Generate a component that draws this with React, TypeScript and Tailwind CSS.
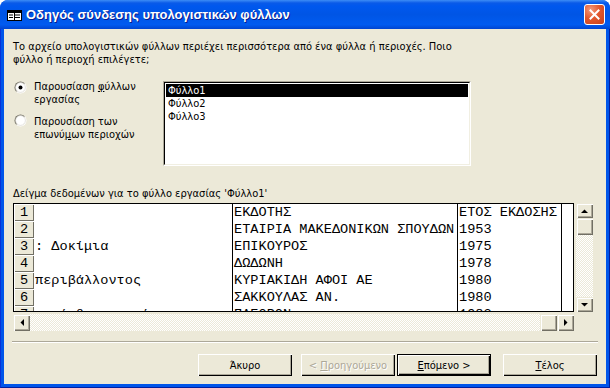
import React from 'react';

const ui = "font-['DejaVu_Sans_Condensed','DejaVu_Sans',sans-serif] [font-stretch:condensed] text-[11px] leading-[13px] text-black";
const mono = "font-['Liberation_Mono','Courier_New',monospace] text-[13.6px] leading-[17px] text-black";

const rows = [
  ['', 'ΕΚΔΟΤΗΣ', 'ΕΤΟΣ ΕΚΔΟΣΗΣ'],
  ['', 'ΕΤΑΙΡΙΑ ΜΑΚΕΔΟΝΙΚΩΝ ΣΠΟΥΔΩΝ', '1953'],
  [': Δοκίμια', 'ΕΠΙΚΟΥΡΟΣ', '1975'],
  ['', 'ΔΩΔΩΝΗ', '1978'],
  ['περιβάλλοντος', 'ΚΥΡΙΑΚΙΔΗ ΑΦΟΙ ΑΕ', '1980'],
  ['', 'ΣΑΚΚΟΥΛΑΣ ΑΝ.', '1980'],
  ['οι άνθρωποι σήμερα', 'ΠΛΕΘΡΟΝ', '1982'],
];

const Arrow = ({ dir }: { dir: 'up' | 'down' | 'left' | 'right' }) => {
  const pts = {
    up: '0,4 7,4 3.5,0.5',
    down: '0,0 7,0 3.5,3.5',
    left: '4,0 4,7 0.5,3.5',
    right: '0,0 0,7 3.5,3.5',
  }[dir];
  const vertical = dir === 'up' || dir === 'down';
  return (
    <svg width={vertical ? 7 : 4} height={vertical ? 4 : 7} viewBox={vertical ? '0 0 7 4' : '0 0 4 7'}>
      <polygon points={pts} fill="#000" />
    </svg>
  );
};

const ScrollBtn = ({ dir, className = '' }: { dir: 'up' | 'down' | 'left' | 'right'; className?: string }) => (
  <div
    className={`flex items-center justify-center bg-[#ece9d8] shadow-[inset_1px_1px_#ece9d8,inset_2px_2px_#fff,inset_-1px_-1px_#716f64,inset_-2px_-2px_#aca899] ${className}`}
  >
    <Arrow dir={dir} />
  </div>
);

const Thumb = ({ className = '' }: { className?: string }) => (
  <div className={`bg-[#ece9d8] shadow-[inset_1px_1px_#ece9d8,inset_2px_2px_#fff,inset_-1px_-1px_#716f64,inset_-2px_-2px_#aca899] ${className}`} />
);

const Radio = ({ checked }: { checked?: boolean }) => (
  <svg width="13" height="13" viewBox="0 0 13 13" className="shrink-0">
    <defs>
      <linearGradient id={checked ? 'rg1' : 'rg2'} x1="0" y1="0" x2="1" y2="1">
        <stop offset="0.45" stopColor="#716f64" />
        <stop offset="0.55" stopColor="#ffffff" />
      </linearGradient>
    </defs>
    <circle cx="6.5" cy="6.5" r="6" fill={`url(#${checked ? 'rg1' : 'rg2'})`} />
    <circle cx="6.5" cy="6.5" r="4.9" fill="#fff" stroke="#d4d0c8" strokeWidth="0.6" />
    {checked && <circle cx="6.5" cy="6.5" r="2" fill="#000" />}
  </svg>
);

const Button = ({
  children,
  isDefault,
  disabled,
  className = '',
}: {
  children: React.ReactNode;
  isDefault?: boolean;
  disabled?: boolean;
  className?: string;
}) => (
  <div className={`w-[94px] h-[22px] ${isDefault ? 'border border-black' : ''} ${className}`}>
    <div
      className={`h-full flex items-center justify-center bg-[#ece9d8] shadow-[inset_1px_1px_#fff,inset_-1px_-1px_#000,inset_-2px_-2px_#aca899] ${
        disabled ? 'text-[#aca899] [text-shadow:1px_1px_0_#fff]' : ''
      }`}
    >
      <span className="whitespace-pre">{children}</span>
    </div>
  </div>
);

export default function App() {
  return (
    <div className="w-[610px] h-[388px] bg-white">
      <div className="w-[610px] h-[388px] flex flex-col rounded-t-[8px] overflow-hidden bg-[#0055ea]">
        {/* title bar */}
        <div className="h-[29px] shrink-0 flex items-center bg-[linear-gradient(180deg,#3d8df6_0px,#0a5ae8_3px,#0058ee_6px,#0055e5_50%,#005bf0_85%,#0044d0_100%)]">
          <svg width="15" height="11" viewBox="0 0 15 11" className="ml-[7px] mt-[1px]">
            <rect x="0.5" y="0.5" width="14" height="10" fill="#fff" stroke="#000" />
            <rect x="1" y="1" width="13" height="2" fill="#000" />
            <rect x="2" y="4.5" width="4" height="1" fill="#000" />
            <rect x="8" y="4.5" width="5" height="1" fill="#000" />
            <rect x="2" y="7" width="4" height="1" fill="#000" />
            <rect x="8" y="7" width="5" height="1" fill="#000" />
            <rect x="7" y="3" width="1" height="7" fill="#000" />
          </svg>
          <div className="ml-[4px] font-['Liberation_Sans',Arial,sans-serif] font-bold text-[13px] text-white [text-shadow:1px_1px_0_#0a1a8c]">
            Οδηγός σύνδεσης υπολογιστικών φύλλων
          </div>
          <div className="ml-auto mr-[5px] w-[21px] h-[21px] rounded-[3px] border border-white flex items-center justify-center bg-[radial-gradient(circle_at_30%_25%,#f39a7c_0%,#e2582e_45%,#c4401c_100%)]">
            <svg width="11" height="11" viewBox="0 0 11 11">
              <path d="M1.5 1.5 L9.5 9.5 M9.5 1.5 L1.5 9.5" stroke="#fff" strokeWidth="2" strokeLinecap="square" />
            </svg>
          </div>
        </div>

        {/* frame + client area */}
        <div className="flex-1 flex border-l border-l-[#0831d9] border-r border-r-[#001ea0] border-b border-b-[#001ea0] px-[3px] pb-[3px]">
          <div className={`flex-1 flex flex-col bg-[#ece9d8] ${ui}`}>
            <div className="pl-[9px] pt-[11px]">
              Το αρχείο υπολογιστικών φύλλων περιέχει περισσότερα από ένα φύλλα ή περιοχές. Ποιο
              <br />
              φύλλο ή περιοχή επιλέγετε;
            </div>

            <div className="flex mt-[15px]">
              <div className="w-[159px] pl-[10px] flex flex-col">
                <div className="flex items-start gap-[7px]">
                  <Radio checked />
                  <div className="mt-[-1px]">
                    Παρουσίαση <u>φ</u>ύλλων
                    <br />
                    εργασίας
                  </div>
                </div>
                <div className="flex items-start gap-[7px] mt-[8px]">
                  <Radio />
                  <div className="mt-[1px]">
                    Παρουσίαση των
                    <br />
                    επωνύ<u>μ</u>ων περιοχών
                  </div>
                </div>
              </div>

              <div className="w-[308px] h-[85px] border border-t-[#aca899] border-l-[#aca899] border-b-white border-r-white">
                <div className="h-full bg-white border border-t-black border-l-black border-b-[#f1efe2] border-r-[#f1efe2] pt-[1px] px-[1px]">
                  <div className="h-[13px] bg-black text-white pl-[2px]">Φύλλο1</div>
                  <div className="h-[13px] pl-[2px]">Φύλλο2</div>
                  <div className="h-[13px] pl-[2px]">Φύλλο3</div>
                </div>
              </div>
            </div>

            <div className="pl-[9px] mt-[21px]">Δείγμα δεδομένων για το φύλλο εργασίας 'Φύλλο1'</div>

            {/* data preview grid */}
            <div className="ml-[9px] mt-[3px] flex flex-col">
              <div className="flex">
                <div className="w-[561px] h-[109px] border border-black bg-white overflow-hidden">
                  {rows.map((r, i) => (
                    <div key={i} className={`flex h-[17px] ${mono}`}>
                      <div className="w-[20px] shrink-0 text-center bg-[#ece9d8] shadow-[inset_1px_1px_#fff,inset_-1px_-1px_#716f64]">
                        {i + 1}
                      </div>
                      <div className="w-[199px] shrink-0 border-r border-black pl-[1px] whitespace-pre overflow-hidden">{r[0]}</div>
                      <div className="w-[225px] shrink-0 border-r border-black pl-[1px] whitespace-pre overflow-hidden">{r[1]}</div>
                      <div className="w-[104px] shrink-0 border-r border-black pl-[1px] whitespace-pre overflow-hidden">{r[2]}</div>
                      <div className="flex-1" />
                    </div>
                  ))}
                </div>
                <div className="ml-[2px] w-[17px] h-[109px] flex flex-col bg-[repeating-conic-gradient(#ffffff_0%_25%,#ece9d8_0%_50%)] bg-[length:2px_2px]">
                  <ScrollBtn dir="up" className="h-[15px]" />
                  <Thumb className="h-[17px]" />
                  <div className="flex-1" />
                  <ScrollBtn dir="down" className="h-[15px]" />
                </div>
              </div>
              <div className="mt-[2px] w-[561px] h-[17px] flex bg-[repeating-conic-gradient(#ffffff_0%_25%,#ece9d8_0%_50%)] bg-[length:2px_2px]">
                <ScrollBtn dir="left" className="w-[17px]" />
                <div className="flex-1" />
                <Thumb className="w-[17px]" />
                <ScrollBtn dir="right" className="w-[17px]" />
              </div>
            </div>

            <div className="mx-[8px] mt-[10px] h-[2px] border-t border-t-[#aca899] border-b border-b-white" />

            <div className="flex justify-end pr-[9px] mt-[11px]">
              <Button className="mr-[9px]">Άκυρο</Button>
              <Button disabled className="mr-[2px]">
                &lt; <u>Π</u>ροηγούμενο
              </Button>
              <Button isDefault className="mr-[12px]">
                <u>Ε</u>πόμενο &gt;
              </Button>
              <Button>
                <u>Τ</u>έλος
              </Button>
            </div>
          </div>
        </div>
      </div>
    </div>
  );
}
